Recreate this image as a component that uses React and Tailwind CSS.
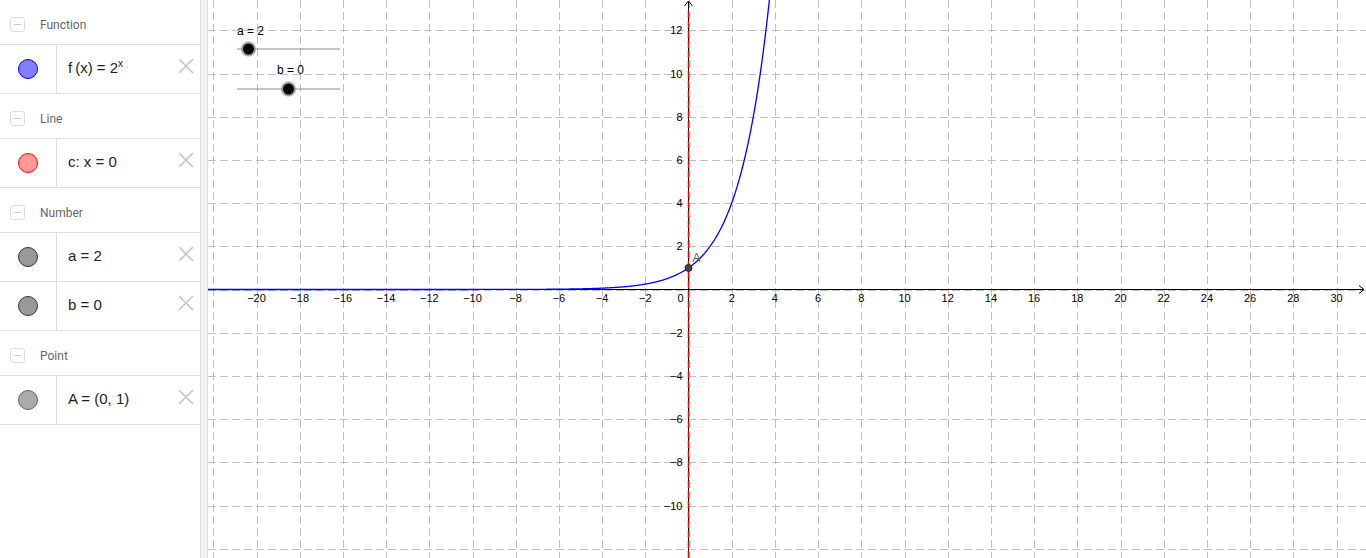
import React from 'react'

// graph geometry (svg coords, svg starts at page x=208)
const W = 1158
const H = 558
const X0 = 480.5
const Y0 = 289.5
const S = 21.6

const sections = [
  {
    title: 'Function',
    items: [{ id: 'f', fill: 'bg-[#8080ff]', ring: 'border-[#0000ff]', label: <>f&thinsp;(x) = 2<sup className="text-[10px] relative -top-[6px]">x</sup></> }],
  },
  {
    title: 'Line',
    items: [{ id: 'c', fill: 'bg-[#ff9999]', ring: 'border-[#ff0000]', label: <>c: x = 0</> }],
  },
  {
    title: 'Number',
    items: [
      { id: 'a', fill: 'bg-[#999999]', ring: 'border-[#333333]', label: <>a = 2</> },
      { id: 'b', fill: 'bg-[#999999]', ring: 'border-[#333333]', label: <>b = 0</> },
    ],
  },
  {
    title: 'Point',
    items: [{ id: 'A', fill: 'bg-[#aaaaaa]', ring: 'border-[#666666]', label: <>A = (0, 1)</> }],
  },
]

const SectionHeader = ({ title }) => (
  <div className="h-[45px] border-b border-[#dddddd] flex items-center pt-[5px] pl-[10px] gap-[15px]">
    <div className="w-[15px] h-[15px] rounded-[3px] border border-[#dddddd] flex items-center justify-center">
      <div className="w-[7px] h-[1.5px] bg-[#cccccc]" />
    </div>
    <span className="text-[12px] text-[#666666] font-['Roboto',sans-serif]">{title}</span>
  </div>
)

const Item = ({ fill, ring, label }) => (
  <div className="h-[49px] border-b border-[#dddddd] flex items-stretch">
    <div className="w-[57px] border-r border-[#dddddd] flex items-center justify-center">
      <div className={`w-[20px] h-[20px] rounded-full border ${fill} ${ring}`} />
    </div>
    <div className="flex-1 flex items-center pl-[11px] text-[15px] text-[#222222] font-['Liberation_Sans',Arial,sans-serif] pb-[2px]">
      <span>{label}</span>
    </div>
    <div className="flex items-center pr-[6px] pb-[6px]">
      <svg width="16" height="16" viewBox="0 0 16 16">
        <path d="M1 1 L15 15 M15 1 L1 15" stroke="#c4c4c4" strokeWidth="1.6" fill="none" />
      </svg>
    </div>
  </div>
)

const fmt = (n) => (n < 0 ? '\u2212' + Math.abs(n) : String(n))

const Graph = () => {
  const vGrid = []
  for (let k = -11; k <= 15; k++) vGrid.push(Math.round(X0 + k * 43.2) + 0.5)
  const hGrid = []
  for (let k = -6; k <= 6; k++) hGrid.push(Math.round(Y0 + k * 43.2) + 0.5)

  const xLabels = []
  for (let n = -20; n <= 30; n += 2) if (n !== 0) xLabels.push(n)
  const yLabels = []
  for (let n = -10; n <= 12; n += 2) if (n !== 0) yLabels.push(n)

  let d = ''
  const xmin = -X0 / S
  for (let i = 0; i <= 600; i++) {
    const x = xmin + (i / 600) * (3.8 - xmin)
    const px = X0 + x * S
    const py = Y0 - Math.pow(2, x) * S
    d += (i === 0 ? 'M' : 'L') + px.toFixed(2) + ' ' + py.toFixed(2) + ' '
  }

  return (
    <svg width={W} height={H} className="block" fontFamily="'Liberation Sans', Arial, sans-serif">
      {vGrid.map((x) => (
        <line key={'v' + x} x1={x} y1={0} x2={x} y2={H} stroke="#c0c0c0" strokeDasharray="8 4" />
      ))}
      {hGrid.map((y) => (
        <line key={'h' + y} x1={0} y1={y} x2={W} y2={y} stroke="#c0c0c0" strokeDasharray="8 4" />
      ))}

      {/* axes */}
      <line x1={0} y1={Y0} x2={W - 2} y2={Y0} stroke="#000" />
      <path d={`M${W - 7} ${Y0 - 4} L${W - 2} ${Y0} L${W - 7} ${Y0 + 4}`} stroke="#000" fill="none" />
      <line x1={X0} y1={H} x2={X0} y2={1} stroke="#000" />
      <path d={`M${X0 - 4} 6 L${X0} 1 L${X0 + 4} 6`} stroke="#000" fill="none" />

      {xLabels.map((n) => (
        <text key={'xl' + n} x={X0 + n * S} y={Y0 + 12.5} fontSize="11" textAnchor="middle" fill="#000">
          {fmt(n)}
        </text>
      ))}
      <text x={X0 - 5} y={Y0 + 12.5} fontSize="11" textAnchor="end" fill="#000">0</text>
      {yLabels.map((n) => (
        <text key={'yl' + n} x={X0 - 6} y={Y0 - n * S + 4} fontSize="11" textAnchor="end" fill="#000">
          {fmt(n)}
        </text>
      ))}

      {/* line c: x = 0 */}
      <line x1={X0} y1={H} x2={X0} y2={8} stroke="#ff0000" strokeWidth="1.5" strokeDasharray="7 3" />

      {/* f(x) = 2^x */}
      <path d={d} stroke="#0000ff" strokeWidth="1.3" fill="none" />

      {/* point A */}
      <circle cx={X0} cy={Y0 - S} r="3.5" fill="#444444" stroke="#111111" strokeWidth="0.8" />
      <text x={X0 + 4} y={Y0 - S - 6} fontSize="12" fill="#606060">A</text>

      {/* sliders */}
      <text x={29} y={34.5} fontSize="12" fill="#000">a = 2</text>
      <line x1={29} y1={49} x2={132} y2={49} stroke="#8a8a8a" />
      <circle cx={40.5} cy={49} r="7.5" fill="#8c8c8c" opacity="0.8" />
      <circle cx={40.5} cy={49} r="5.5" fill="#000" />

      <text x={69} y={73.5} fontSize="12" fill="#000">b = 0</text>
      <line x1={29} y1={89} x2={132} y2={89} stroke="#8a8a8a" />
      <circle cx={80.5} cy={89} r="7.5" fill="#8c8c8c" opacity="0.8" />
      <circle cx={80.5} cy={89} r="5.5" fill="#000" />
    </svg>
  )
}

export default function App() {
  return (
    <div className="w-[1366px] h-[558px] flex bg-white overflow-hidden">
      <div className="w-[201px] shrink-0 border-r border-[#dddddd] bg-white">
        {sections.map((s) => (
          <div key={s.title}>
            <SectionHeader title={s.title} />
            {s.items.map((it) => (
              <Item key={it.id} {...it} />
            ))}
          </div>
        ))}
      </div>
      <div className="w-[7px] shrink-0 bg-[#f2f2f2] border-r border-[#dddddd]" />
      <div className="flex-1">
        <Graph />
      </div>
    </div>
  )
}
